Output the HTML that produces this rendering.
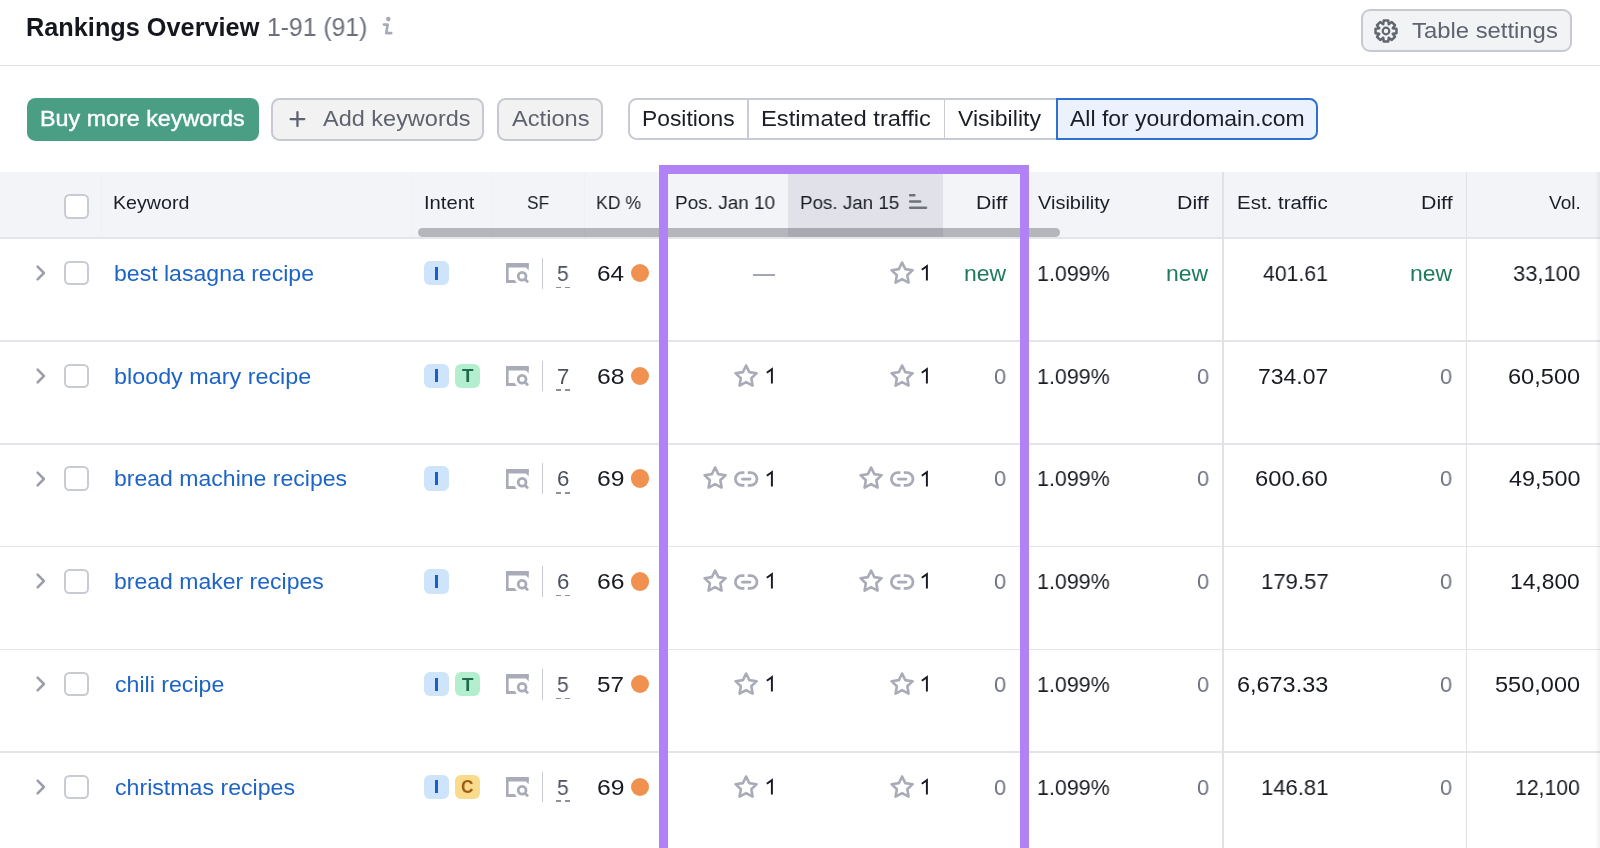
<!DOCTYPE html>
<html><head><meta charset="utf-8"><title>Rankings Overview</title>
<style>
html,body{margin:0;padding:0;background:#fff;width:1600px;height:848px;overflow:hidden;position:relative;font-family:"Liberation Sans", sans-serif}
.a,.btn,.cb,.badge,.t{position:absolute;box-sizing:border-box}
.t{white-space:nowrap;transform-origin:0 0;will-change:transform}
.cb{width:24.5px;height:24.5px;border:2px solid #c9cbd3;border-radius:5.5px;background:#fff}
.badge{width:24.6px;height:24.6px;border-radius:6px}
svg.a{overflow:visible}
</style></head><body>
<svg class="a" style="left:380px;top:14px" width="16" height="24" viewBox="380 14 16 24"><circle cx="388.3" cy="19.1" r="2.3" fill="#a8abb6"/><path d="M384 24.6H387.6L386.3 33.2H391.2" fill="none" stroke="#a8abb6" stroke-width="2.7" stroke-linecap="round" stroke-linejoin="round"/></svg>
<div class="btn" style="left:1360.5px;top:9.2px;width:211px;height:42.6px;background:#f2f3f5;border:2px solid #c6c9d1;border-radius:9px"></div>
<svg class="a" style="left:1372.4px;top:16.6px" width="28" height="28" viewBox="1372.4 16.6 28 28"><path d="M1383.56 23.88 L1384.17 20.14 L1388.63 20.14 L1389.24 23.88 L1389.14 23.84 L1392.22 21.62 L1395.38 24.78 L1393.16 27.86 L1393.12 27.76 L1396.86 28.37 L1396.86 32.83 L1393.12 33.44 L1393.16 33.34 L1395.38 36.42 L1392.22 39.58 L1389.14 37.36 L1389.24 37.32 L1388.63 41.06 L1384.17 41.06 L1383.56 37.32 L1383.66 37.36 L1380.58 39.58 L1377.42 36.42 L1379.64 33.34 L1379.68 33.44 L1375.94 32.83 L1375.94 28.37 L1379.68 27.76 L1379.64 27.86 L1377.42 24.78 L1380.58 21.62 L1383.66 23.84Z" fill="none" stroke="#62666f" stroke-width="2.5" stroke-linejoin="round"/><circle cx="1386.4" cy="30.6" r="3.3" fill="none" stroke="#62666f" stroke-width="2.2"/></svg>
<div class="a" style="left:0;top:64.6px;width:1600px;height:1.8px;background:#dfe0e6"></div>
<div class="btn" style="left:26.7px;top:97.6px;width:231.9px;height:43.2px;background:#4a9e84;border-radius:8.5px"></div>
<div class="btn" style="left:271.2px;top:97.9px;width:212.5px;height:42.7px;background:#f2f2f3;border:2px solid #c6c9d1;border-radius:8.5px"></div>
<svg class="a" style="left:286px;top:108px" width="24" height="24" viewBox="286 108 24 24"><path d="M290.6 119.1H304.3M297.45 112.2V126" stroke="#5f6370" stroke-width="2.3" stroke-linecap="round"/></svg>
<div class="btn" style="left:497.4px;top:97.9px;width:105.3px;height:42.7px;background:#f2f2f3;border:2px solid #c6c9d1;border-radius:8.5px"></div>
<div class="btn" style="left:628.4px;top:97.8px;width:690px;height:42.4px;background:#fff;border:2px solid #c8cbd3;border-radius:8.5px"></div>
<div class="a" style="left:747.4px;top:98px;width:1.6px;height:42px;background:#c9cbd3"></div>
<div class="a" style="left:943.9px;top:98px;width:1.6px;height:42px;background:#c9cbd3"></div>
<div class="btn" style="left:1055.5px;top:97.8px;width:262.9px;height:42.4px;background:#ebf2fe;border:2px solid #3070d0;border-radius:0 8.5px 8.5px 0"></div>
<div class="a" style="left:0;top:172.2px;width:1600px;height:66.30000000000001px;background:#f3f4f8"></div>
<div class="a" style="left:788.1px;top:172.2px;width:154.7px;height:66.30000000000001px;background:#e1e2e9"></div>
<div class="a" style="left:101px;top:172.2px;width:1px;height:66.30000000000001px;background:#eef0f4"></div>
<div class="a" style="left:411.9px;top:172.2px;width:1px;height:66.30000000000001px;background:#eef0f4"></div>
<div class="a" style="left:491.9px;top:172.2px;width:1px;height:66.30000000000001px;background:#eef0f4"></div>
<div class="a" style="left:583.8px;top:172.2px;width:1px;height:66.30000000000001px;background:#eef0f4"></div>
<div class="a" style="left:0;top:237.2px;width:1600px;height:1.5px;background:#e4e5eb"></div>
<div class="cb" style="left:64.4px;top:194.3px"></div>
<svg class="a" style="left:905px;top:190px" width="26" height="22" viewBox="905 190 26 22"><path d="M910.2 195.3H914.4M910.2 201.5H920.2M910.2 207.7H926" stroke="#6e727d" stroke-width="2.6" stroke-linecap="round"/></svg>
<div class="a" style="left:0;top:340.35px;width:1600px;height:1.6px;background:#e4e5eb"></div>
<svg class="a" style="left:32px;top:262.10px" width="18" height="22" viewBox="32 262.10 18 22"><path d="M37.6 266.70L43.9 273.10L37.6 279.50" fill="none" stroke="#9b9ea8" stroke-width="2.5" stroke-linecap="round" stroke-linejoin="round"/></svg>
<div class="cb" style="left:64.3px;top:260.90px"></div>
<div class="badge" style="left:424.2px;top:260.80px;background:#cde4fb;color:#1b5fc5"></div>
<div class="a" style="left:435.2px;top:266.50px;width:2.8px;height:13.2px;background:#1b5fc5"></div>
<svg class="a" style="left:504.40px;top:261.10px" width="28" height="25" viewBox="504.40 261.10 28 25"><g fill="#a9acb8"><rect x="506.40" y="263.10" width="22.7" height="4.6" rx="1"/><rect x="506.40" y="263.10" width="2.6" height="19.9" rx="0.8"/><path d="M506.40 280.10H515.00L517.20 283.00H506.40Z"/><path d="M526.50 263.10H529.10V270.50L526.50 267.70Z"/></g><circle cx="522.50" cy="276.40" r="3.9" fill="none" stroke="#a9acb8" stroke-width="2.8"/><path d="M525.60 279.50L527.70 281.60" stroke="#a9acb8" stroke-width="2.8" stroke-linecap="round"/></svg>
<div class="a" style="left:541.7px;top:257.90px;width:1.6px;height:30.7px;background:#c9cbd3"></div>
<div class="a" style="left:556px;top:286.50px;width:4.5px;height:1.5px;background:#8d909b"></div>
<div class="a" style="left:565.2px;top:286.50px;width:4.6px;height:1.5px;background:#8d909b"></div>
<div class="a" style="left:630.5px;top:263.85px;width:18.5px;height:18.5px;border-radius:50%;background:#f09150"></div>
<div class="a" style="left:753.4px;top:274.00px;width:21.6px;height:1.5px;background:#a4a6b6"></div>
<svg class="a" style="left:919.00px;top:262.00px" width="12" height="22" viewBox="919.00 262.00 12 22"><path d="M921.80 269.70L926.90 266.10V280.50" fill="none" stroke="#191b23" stroke-width="1.95" stroke-linejoin="miter"/></svg>
<svg class="a" style="left:886.80px;top:257.80px" width="30" height="30" viewBox="886.80 257.80 30 30"><path d="M901.90 262.30 L905.13 268.95 L912.46 269.97 L907.13 275.10 L908.42 282.38 L901.90 278.90 L895.38 282.38 L896.67 275.10 L891.34 269.97 L898.67 268.95Z" fill="none" stroke="#a9acb8" stroke-width="2.6" stroke-linejoin="round"/></svg>
<div class="a" style="left:0;top:443.10px;width:1600px;height:1.6px;background:#e4e5eb"></div>
<svg class="a" style="left:32px;top:364.85px" width="18" height="22" viewBox="32 364.85 18 22"><path d="M37.6 369.45L43.9 375.85L37.6 382.25" fill="none" stroke="#9b9ea8" stroke-width="2.5" stroke-linecap="round" stroke-linejoin="round"/></svg>
<div class="cb" style="left:64.3px;top:363.65px"></div>
<div class="badge" style="left:424.2px;top:363.55px;background:#cde4fb;color:#1b5fc5"></div>
<div class="a" style="left:435.2px;top:369.25px;width:2.8px;height:13.2px;background:#1b5fc5"></div>
<div class="badge" style="left:455.0px;top:363.55px;background:#b3efcf;color:#216b4d"></div>
<svg class="a" style="left:504.40px;top:363.85px" width="28" height="25" viewBox="504.40 363.85 28 25"><g fill="#a9acb8"><rect x="506.40" y="365.85" width="22.7" height="4.6" rx="1"/><rect x="506.40" y="365.85" width="2.6" height="19.9" rx="0.8"/><path d="M506.40 382.85H515.00L517.20 385.75H506.40Z"/><path d="M526.50 365.85H529.10V373.25L526.50 370.45Z"/></g><circle cx="522.50" cy="379.15" r="3.9" fill="none" stroke="#a9acb8" stroke-width="2.8"/><path d="M525.60 382.25L527.70 384.35" stroke="#a9acb8" stroke-width="2.8" stroke-linecap="round"/></svg>
<div class="a" style="left:541.7px;top:360.65px;width:1.6px;height:30.7px;background:#c9cbd3"></div>
<div class="a" style="left:556px;top:389.25px;width:4.5px;height:1.5px;background:#8d909b"></div>
<div class="a" style="left:565.2px;top:389.25px;width:4.6px;height:1.5px;background:#8d909b"></div>
<div class="a" style="left:630.5px;top:366.60px;width:18.5px;height:18.5px;border-radius:50%;background:#f09150"></div>
<svg class="a" style="left:763.50px;top:364.75px" width="12" height="22" viewBox="763.50 364.75 12 22"><path d="M766.30 372.45L771.40 368.85V383.25" fill="none" stroke="#191b23" stroke-width="1.95" stroke-linejoin="miter"/></svg>
<svg class="a" style="left:731.30px;top:360.55px" width="30" height="30" viewBox="731.30 360.55 30 30"><path d="M746.40 365.05 L749.63 371.70 L756.96 372.72 L751.63 377.85 L752.92 385.13 L746.40 381.65 L739.88 385.13 L741.17 377.85 L735.84 372.72 L743.17 371.70Z" fill="none" stroke="#a9acb8" stroke-width="2.6" stroke-linejoin="round"/></svg>
<svg class="a" style="left:919.00px;top:364.75px" width="12" height="22" viewBox="919.00 364.75 12 22"><path d="M921.80 372.45L926.90 368.85V383.25" fill="none" stroke="#191b23" stroke-width="1.95" stroke-linejoin="miter"/></svg>
<svg class="a" style="left:886.80px;top:360.55px" width="30" height="30" viewBox="886.80 360.55 30 30"><path d="M901.90 365.05 L905.13 371.70 L912.46 372.72 L907.13 377.85 L908.42 385.13 L901.90 381.65 L895.38 385.13 L896.67 377.85 L891.34 372.72 L898.67 371.70Z" fill="none" stroke="#a9acb8" stroke-width="2.6" stroke-linejoin="round"/></svg>
<div class="a" style="left:0;top:545.85px;width:1600px;height:1.6px;background:#e4e5eb"></div>
<svg class="a" style="left:32px;top:467.60px" width="18" height="22" viewBox="32 467.60 18 22"><path d="M37.6 472.20L43.9 478.60L37.6 485.00" fill="none" stroke="#9b9ea8" stroke-width="2.5" stroke-linecap="round" stroke-linejoin="round"/></svg>
<div class="cb" style="left:64.3px;top:466.40px"></div>
<div class="badge" style="left:424.2px;top:466.30px;background:#cde4fb;color:#1b5fc5"></div>
<div class="a" style="left:435.2px;top:472.00px;width:2.8px;height:13.2px;background:#1b5fc5"></div>
<svg class="a" style="left:504.40px;top:466.60px" width="28" height="25" viewBox="504.40 466.60 28 25"><g fill="#a9acb8"><rect x="506.40" y="468.60" width="22.7" height="4.6" rx="1"/><rect x="506.40" y="468.60" width="2.6" height="19.9" rx="0.8"/><path d="M506.40 485.60H515.00L517.20 488.50H506.40Z"/><path d="M526.50 468.60H529.10V476.00L526.50 473.20Z"/></g><circle cx="522.50" cy="481.90" r="3.9" fill="none" stroke="#a9acb8" stroke-width="2.8"/><path d="M525.60 485.00L527.70 487.10" stroke="#a9acb8" stroke-width="2.8" stroke-linecap="round"/></svg>
<div class="a" style="left:541.7px;top:463.40px;width:1.6px;height:30.7px;background:#c9cbd3"></div>
<div class="a" style="left:556px;top:492.00px;width:4.5px;height:1.5px;background:#8d909b"></div>
<div class="a" style="left:565.2px;top:492.00px;width:4.6px;height:1.5px;background:#8d909b"></div>
<div class="a" style="left:630.5px;top:469.35px;width:18.5px;height:18.5px;border-radius:50%;background:#f09150"></div>
<svg class="a" style="left:763.50px;top:467.50px" width="12" height="22" viewBox="763.50 467.50 12 22"><path d="M766.30 475.20L771.40 471.60V486.00" fill="none" stroke="#191b23" stroke-width="1.95" stroke-linejoin="miter"/></svg>
<svg class="a" style="left:732.30px;top:467.90px" width="30" height="22" viewBox="732.30 467.90 30 22"><path d="M744.70 472.50H742.10A6.4 6.4 0 0 0 742.10 485.30H744.70M748.10 472.50H750.90A6.4 6.4 0 0 1 750.90 485.30H748.10" fill="none" stroke="#a9acb8" stroke-width="2.75"/><path d="M742.70 478.90H750.30" fill="none" stroke="#a9acb8" stroke-width="2.75" stroke-linecap="round"/></svg>
<svg class="a" style="left:700.40px;top:463.30px" width="30" height="30" viewBox="700.40 463.30 30 30"><path d="M715.50 467.80 L718.73 474.45 L726.06 475.47 L720.73 480.60 L722.02 487.88 L715.50 484.40 L708.98 487.88 L710.27 480.60 L704.94 475.47 L712.27 474.45Z" fill="none" stroke="#a9acb8" stroke-width="2.6" stroke-linejoin="round"/></svg>
<svg class="a" style="left:919.00px;top:467.50px" width="12" height="22" viewBox="919.00 467.50 12 22"><path d="M921.80 475.20L926.90 471.60V486.00" fill="none" stroke="#191b23" stroke-width="1.95" stroke-linejoin="miter"/></svg>
<svg class="a" style="left:887.80px;top:467.90px" width="30" height="22" viewBox="887.80 467.90 30 22"><path d="M900.20 472.50H897.60A6.4 6.4 0 0 0 897.60 485.30H900.20M903.60 472.50H906.40A6.4 6.4 0 0 1 906.40 485.30H903.60" fill="none" stroke="#a9acb8" stroke-width="2.75"/><path d="M898.20 478.90H905.80" fill="none" stroke="#a9acb8" stroke-width="2.75" stroke-linecap="round"/></svg>
<svg class="a" style="left:855.90px;top:463.30px" width="30" height="30" viewBox="855.90 463.30 30 30"><path d="M871.00 467.80 L874.23 474.45 L881.56 475.47 L876.23 480.60 L877.52 487.88 L871.00 484.40 L864.48 487.88 L865.77 480.60 L860.44 475.47 L867.77 474.45Z" fill="none" stroke="#a9acb8" stroke-width="2.6" stroke-linejoin="round"/></svg>
<div class="a" style="left:0;top:648.60px;width:1600px;height:1.6px;background:#e4e5eb"></div>
<svg class="a" style="left:32px;top:570.35px" width="18" height="22" viewBox="32 570.35 18 22"><path d="M37.6 574.95L43.9 581.35L37.6 587.75" fill="none" stroke="#9b9ea8" stroke-width="2.5" stroke-linecap="round" stroke-linejoin="round"/></svg>
<div class="cb" style="left:64.3px;top:569.15px"></div>
<div class="badge" style="left:424.2px;top:569.05px;background:#cde4fb;color:#1b5fc5"></div>
<div class="a" style="left:435.2px;top:574.75px;width:2.8px;height:13.2px;background:#1b5fc5"></div>
<svg class="a" style="left:504.40px;top:569.35px" width="28" height="25" viewBox="504.40 569.35 28 25"><g fill="#a9acb8"><rect x="506.40" y="571.35" width="22.7" height="4.6" rx="1"/><rect x="506.40" y="571.35" width="2.6" height="19.9" rx="0.8"/><path d="M506.40 588.35H515.00L517.20 591.25H506.40Z"/><path d="M526.50 571.35H529.10V578.75L526.50 575.95Z"/></g><circle cx="522.50" cy="584.65" r="3.9" fill="none" stroke="#a9acb8" stroke-width="2.8"/><path d="M525.60 587.75L527.70 589.85" stroke="#a9acb8" stroke-width="2.8" stroke-linecap="round"/></svg>
<div class="a" style="left:541.7px;top:566.15px;width:1.6px;height:30.7px;background:#c9cbd3"></div>
<div class="a" style="left:556px;top:594.75px;width:4.5px;height:1.5px;background:#8d909b"></div>
<div class="a" style="left:565.2px;top:594.75px;width:4.6px;height:1.5px;background:#8d909b"></div>
<div class="a" style="left:630.5px;top:572.10px;width:18.5px;height:18.5px;border-radius:50%;background:#f09150"></div>
<svg class="a" style="left:763.50px;top:570.25px" width="12" height="22" viewBox="763.50 570.25 12 22"><path d="M766.30 577.95L771.40 574.35V588.75" fill="none" stroke="#191b23" stroke-width="1.95" stroke-linejoin="miter"/></svg>
<svg class="a" style="left:732.30px;top:570.65px" width="30" height="22" viewBox="732.30 570.65 30 22"><path d="M744.70 575.25H742.10A6.4 6.4 0 0 0 742.10 588.05H744.70M748.10 575.25H750.90A6.4 6.4 0 0 1 750.90 588.05H748.10" fill="none" stroke="#a9acb8" stroke-width="2.75"/><path d="M742.70 581.65H750.30" fill="none" stroke="#a9acb8" stroke-width="2.75" stroke-linecap="round"/></svg>
<svg class="a" style="left:700.40px;top:566.05px" width="30" height="30" viewBox="700.40 566.05 30 30"><path d="M715.50 570.55 L718.73 577.20 L726.06 578.22 L720.73 583.35 L722.02 590.63 L715.50 587.15 L708.98 590.63 L710.27 583.35 L704.94 578.22 L712.27 577.20Z" fill="none" stroke="#a9acb8" stroke-width="2.6" stroke-linejoin="round"/></svg>
<svg class="a" style="left:919.00px;top:570.25px" width="12" height="22" viewBox="919.00 570.25 12 22"><path d="M921.80 577.95L926.90 574.35V588.75" fill="none" stroke="#191b23" stroke-width="1.95" stroke-linejoin="miter"/></svg>
<svg class="a" style="left:887.80px;top:570.65px" width="30" height="22" viewBox="887.80 570.65 30 22"><path d="M900.20 575.25H897.60A6.4 6.4 0 0 0 897.60 588.05H900.20M903.60 575.25H906.40A6.4 6.4 0 0 1 906.40 588.05H903.60" fill="none" stroke="#a9acb8" stroke-width="2.75"/><path d="M898.20 581.65H905.80" fill="none" stroke="#a9acb8" stroke-width="2.75" stroke-linecap="round"/></svg>
<svg class="a" style="left:855.90px;top:566.05px" width="30" height="30" viewBox="855.90 566.05 30 30"><path d="M871.00 570.55 L874.23 577.20 L881.56 578.22 L876.23 583.35 L877.52 590.63 L871.00 587.15 L864.48 590.63 L865.77 583.35 L860.44 578.22 L867.77 577.20Z" fill="none" stroke="#a9acb8" stroke-width="2.6" stroke-linejoin="round"/></svg>
<div class="a" style="left:0;top:751.35px;width:1600px;height:1.6px;background:#e4e5eb"></div>
<svg class="a" style="left:32px;top:673.10px" width="18" height="22" viewBox="32 673.10 18 22"><path d="M37.6 677.70L43.9 684.10L37.6 690.50" fill="none" stroke="#9b9ea8" stroke-width="2.5" stroke-linecap="round" stroke-linejoin="round"/></svg>
<div class="cb" style="left:64.3px;top:671.90px"></div>
<div class="badge" style="left:424.2px;top:671.80px;background:#cde4fb;color:#1b5fc5"></div>
<div class="a" style="left:435.2px;top:677.50px;width:2.8px;height:13.2px;background:#1b5fc5"></div>
<div class="badge" style="left:455.0px;top:671.80px;background:#b3efcf;color:#216b4d"></div>
<svg class="a" style="left:504.40px;top:672.10px" width="28" height="25" viewBox="504.40 672.10 28 25"><g fill="#a9acb8"><rect x="506.40" y="674.10" width="22.7" height="4.6" rx="1"/><rect x="506.40" y="674.10" width="2.6" height="19.9" rx="0.8"/><path d="M506.40 691.10H515.00L517.20 694.00H506.40Z"/><path d="M526.50 674.10H529.10V681.50L526.50 678.70Z"/></g><circle cx="522.50" cy="687.40" r="3.9" fill="none" stroke="#a9acb8" stroke-width="2.8"/><path d="M525.60 690.50L527.70 692.60" stroke="#a9acb8" stroke-width="2.8" stroke-linecap="round"/></svg>
<div class="a" style="left:541.7px;top:668.90px;width:1.6px;height:30.7px;background:#c9cbd3"></div>
<div class="a" style="left:556px;top:697.50px;width:4.5px;height:1.5px;background:#8d909b"></div>
<div class="a" style="left:565.2px;top:697.50px;width:4.6px;height:1.5px;background:#8d909b"></div>
<div class="a" style="left:630.5px;top:674.85px;width:18.5px;height:18.5px;border-radius:50%;background:#f09150"></div>
<svg class="a" style="left:763.50px;top:673.00px" width="12" height="22" viewBox="763.50 673.00 12 22"><path d="M766.30 680.70L771.40 677.10V691.50" fill="none" stroke="#191b23" stroke-width="1.95" stroke-linejoin="miter"/></svg>
<svg class="a" style="left:731.30px;top:668.80px" width="30" height="30" viewBox="731.30 668.80 30 30"><path d="M746.40 673.30 L749.63 679.95 L756.96 680.97 L751.63 686.10 L752.92 693.38 L746.40 689.90 L739.88 693.38 L741.17 686.10 L735.84 680.97 L743.17 679.95Z" fill="none" stroke="#a9acb8" stroke-width="2.6" stroke-linejoin="round"/></svg>
<svg class="a" style="left:919.00px;top:673.00px" width="12" height="22" viewBox="919.00 673.00 12 22"><path d="M921.80 680.70L926.90 677.10V691.50" fill="none" stroke="#191b23" stroke-width="1.95" stroke-linejoin="miter"/></svg>
<svg class="a" style="left:886.80px;top:668.80px" width="30" height="30" viewBox="886.80 668.80 30 30"><path d="M901.90 673.30 L905.13 679.95 L912.46 680.97 L907.13 686.10 L908.42 693.38 L901.90 689.90 L895.38 693.38 L896.67 686.10 L891.34 680.97 L898.67 679.95Z" fill="none" stroke="#a9acb8" stroke-width="2.6" stroke-linejoin="round"/></svg>
<div class="a" style="left:0;top:854.10px;width:1600px;height:1.6px;background:#e4e5eb"></div>
<svg class="a" style="left:32px;top:775.85px" width="18" height="22" viewBox="32 775.85 18 22"><path d="M37.6 780.45L43.9 786.85L37.6 793.25" fill="none" stroke="#9b9ea8" stroke-width="2.5" stroke-linecap="round" stroke-linejoin="round"/></svg>
<div class="cb" style="left:64.3px;top:774.65px"></div>
<div class="badge" style="left:424.2px;top:774.55px;background:#cde4fb;color:#1b5fc5"></div>
<div class="a" style="left:435.2px;top:780.25px;width:2.8px;height:13.2px;background:#1b5fc5"></div>
<div class="badge" style="left:455.0px;top:774.55px;background:#f8dc8c;color:#9a5a12"></div>
<svg class="a" style="left:504.40px;top:774.85px" width="28" height="25" viewBox="504.40 774.85 28 25"><g fill="#a9acb8"><rect x="506.40" y="776.85" width="22.7" height="4.6" rx="1"/><rect x="506.40" y="776.85" width="2.6" height="19.9" rx="0.8"/><path d="M506.40 793.85H515.00L517.20 796.75H506.40Z"/><path d="M526.50 776.85H529.10V784.25L526.50 781.45Z"/></g><circle cx="522.50" cy="790.15" r="3.9" fill="none" stroke="#a9acb8" stroke-width="2.8"/><path d="M525.60 793.25L527.70 795.35" stroke="#a9acb8" stroke-width="2.8" stroke-linecap="round"/></svg>
<div class="a" style="left:541.7px;top:771.65px;width:1.6px;height:30.7px;background:#c9cbd3"></div>
<div class="a" style="left:556px;top:800.25px;width:4.5px;height:1.5px;background:#8d909b"></div>
<div class="a" style="left:565.2px;top:800.25px;width:4.6px;height:1.5px;background:#8d909b"></div>
<div class="a" style="left:630.5px;top:777.60px;width:18.5px;height:18.5px;border-radius:50%;background:#f09150"></div>
<svg class="a" style="left:763.50px;top:775.75px" width="12" height="22" viewBox="763.50 775.75 12 22"><path d="M766.30 783.45L771.40 779.85V794.25" fill="none" stroke="#191b23" stroke-width="1.95" stroke-linejoin="miter"/></svg>
<svg class="a" style="left:731.30px;top:771.55px" width="30" height="30" viewBox="731.30 771.55 30 30"><path d="M746.40 776.05 L749.63 782.70 L756.96 783.72 L751.63 788.85 L752.92 796.13 L746.40 792.65 L739.88 796.13 L741.17 788.85 L735.84 783.72 L743.17 782.70Z" fill="none" stroke="#a9acb8" stroke-width="2.6" stroke-linejoin="round"/></svg>
<svg class="a" style="left:919.00px;top:775.75px" width="12" height="22" viewBox="919.00 775.75 12 22"><path d="M921.80 783.45L926.90 779.85V794.25" fill="none" stroke="#191b23" stroke-width="1.95" stroke-linejoin="miter"/></svg>
<svg class="a" style="left:886.80px;top:771.55px" width="30" height="30" viewBox="886.80 771.55 30 30"><path d="M901.90 776.05 L905.13 782.70 L912.46 783.72 L907.13 788.85 L908.42 796.13 L901.90 792.65 L895.38 796.13 L896.67 788.85 L891.34 783.72 L898.67 782.70Z" fill="none" stroke="#a9acb8" stroke-width="2.6" stroke-linejoin="round"/></svg>
<div class="a" style="left:1222.1px;top:172.2px;width:1.6px;height:675.8px;background:#e1e2e8"></div>
<div class="a" style="left:1465.7px;top:172.2px;width:1.6px;height:675.8px;background:#e1e2e8"></div>
<div class="a" style="left:1595px;top:172.2px;width:5px;height:675.8px;background:linear-gradient(90deg,rgba(0,0,0,0),rgba(0,0,0,0.06))"></div>
<div class="a" style="left:417.5px;top:228px;width:642.5px;height:9px;border-radius:4.5px;background:rgba(20,20,30,0.275)"></div>
<div class="a" style="left:659px;top:164.8px;width:370.3px;height:700px;box-sizing:border-box;border:9px solid #b082f5"></div>
<span class="t" style="left:26.42px;top:15.00px;font-size:25.03px;line-height:25.03px;color:#15171f;font-weight:700;transform:scaleX(1.0111)">Rankings Overview</span>
<span class="t" style="left:266.95px;top:15.00px;font-size:24.89px;line-height:24.89px;color:#6b6f7b;transform:scaleX(0.9934)">1-91 (91)</span>
<span class="t" style="left:1412.23px;top:20.00px;font-size:22.19px;line-height:22.19px;color:#5f6370;transform:scaleX(1.0747)">Table settings</span>
<span class="t" style="left:40.08px;top:108.00px;font-size:22.61px;line-height:22.61px;color:#ffffff;transform:scaleX(1.0308);-webkit-text-stroke:0.4px #fff">Buy more keywords</span>
<span class="t" style="left:322.80px;top:108.00px;font-size:22.61px;line-height:22.61px;color:#5f6370;transform:scaleX(1.0389)">Add keywords</span>
<span class="t" style="left:511.50px;top:108.00px;font-size:22.61px;line-height:22.61px;color:#5f6370;transform:scaleX(1.0458)">Actions</span>
<span class="t" style="left:641.82px;top:108.00px;font-size:21.90px;line-height:21.90px;color:#1b1e26;transform:scaleX(1.0432)">Positions</span>
<span class="t" style="left:760.74px;top:108.00px;font-size:21.90px;line-height:21.90px;color:#1b1e26;transform:scaleX(1.0857)">Estimated traffic</span>
<span class="t" style="left:958.00px;top:108.00px;font-size:21.90px;line-height:21.90px;color:#1b1e26;transform:scaleX(1.0546)">Visibility</span>
<span class="t" style="left:1070.40px;top:108.00px;font-size:21.90px;line-height:21.90px;color:#1b1e26;transform:scaleX(1.0484)">All for yourdomain.com</span>
<span class="t" style="left:113.47px;top:193.00px;font-size:19.06px;line-height:19.06px;color:#1b1e26;transform:scaleX(1.0301)">Keyword</span>
<span class="t" style="left:423.82px;top:193.00px;font-size:19.06px;line-height:19.06px;color:#1b1e26;transform:scaleX(1.0592)">Intent</span>
<span class="t" style="left:526.86px;top:193.00px;font-size:19.06px;line-height:19.06px;color:#1b1e26;transform:scaleX(0.9077)">SF</span>
<span class="t" style="left:596.02px;top:193.00px;font-size:19.06px;line-height:19.06px;color:#1b1e26;transform:scaleX(0.9258)">KD %</span>
<span class="t" style="left:674.77px;top:193.00px;font-size:19.06px;line-height:19.06px;color:#1b1e26;transform:scaleX(0.9945)">Pos. Jan 10</span>
<span class="t" style="left:799.78px;top:193.00px;font-size:19.06px;line-height:19.06px;color:#1b1e26;transform:scaleX(0.9863)">Pos. Jan 15</span>
<span class="t" style="left:975.55px;top:193.00px;font-size:19.06px;line-height:19.06px;color:#1b1e26;transform:scaleX(1.1110)">Diff</span>
<span class="t" style="left:1038.40px;top:193.00px;font-size:19.06px;line-height:19.06px;color:#1b1e26;transform:scaleX(1.0497)">Visibility</span>
<span class="t" style="left:1177.33px;top:193.00px;font-size:19.06px;line-height:19.06px;color:#1b1e26;transform:scaleX(1.1185)">Diff</span>
<span class="t" style="left:1237.00px;top:193.00px;font-size:19.06px;line-height:19.06px;color:#1b1e26;transform:scaleX(1.0751)">Est. traffic</span>
<span class="t" style="left:1421.13px;top:193.00px;font-size:19.06px;line-height:19.06px;color:#1b1e26;transform:scaleX(1.1185)">Diff</span>
<span class="t" style="left:1549.40px;top:193.00px;font-size:19.06px;line-height:19.06px;color:#1b1e26;transform:scaleX(0.9977)">Vol.</span>
<span class="t" style="left:114.06px;top:264.00px;font-size:21.51px;line-height:21.51px;color:#1d64c6;transform:scaleX(1.0726)">best lasagna recipe</span>
<span class="t" style="left:557.14px;top:263.00px;font-size:22.19px;line-height:22.19px;color:#4d5160;transform:scaleX(0.9490)">5</span>
<span class="t" style="left:596.56px;top:262.00px;font-size:22.76px;line-height:22.76px;color:#191b23;transform:scaleX(1.0683)">64</span>
<span class="t" style="left:964.00px;top:262.00px;font-size:22.96px;line-height:22.96px;color:#1e7b5b">new</span>
<span class="t" style="left:1037.41px;top:262.00px;font-size:22.76px;line-height:22.76px;color:#191b23;transform:scaleX(0.9408)">1.099%</span>
<span class="t" style="left:1166.10px;top:262.00px;font-size:22.96px;line-height:22.96px;color:#1e7b5b">new</span>
<span class="t" style="left:1409.80px;top:262.00px;font-size:22.96px;line-height:22.96px;color:#1e7b5b">new</span>
<span class="t" style="left:1263.27px;top:262.00px;font-size:22.76px;line-height:22.76px;color:#191b23;transform:scaleX(0.9322)">401.61</span>
<span class="t" style="left:1512.91px;top:262.00px;font-size:22.76px;line-height:22.76px;color:#191b23;transform:scaleX(0.9644)">33,100</span>
<span class="t" style="left:114.04px;top:367.00px;font-size:21.51px;line-height:21.51px;color:#1d64c6;transform:scaleX(1.0858)">bloody mary recipe</span>
<span class="t" style="left:461.80px;top:367.00px;font-size:18.77px;line-height:18.77px;color:#216b4d;font-weight:700;transform:scaleX(0.9617)">T</span>
<span class="t" style="left:556.78px;top:366.00px;font-size:22.19px;line-height:22.19px;color:#4d5160;transform:scaleX(0.9806)">7</span>
<span class="t" style="left:596.54px;top:365.00px;font-size:22.76px;line-height:22.76px;color:#191b23;transform:scaleX(1.0846)">68</span>
<span class="t" style="left:994.32px;top:365.00px;font-size:22.76px;line-height:22.76px;color:#6c7080;transform:scaleX(0.9578)">0</span>
<span class="t" style="left:1037.41px;top:365.00px;font-size:22.76px;line-height:22.76px;color:#191b23;transform:scaleX(0.9408)">1.099%</span>
<span class="t" style="left:1196.72px;top:365.00px;font-size:22.76px;line-height:22.76px;color:#6c7080;transform:scaleX(0.9578)">0</span>
<span class="t" style="left:1440.42px;top:365.00px;font-size:22.76px;line-height:22.76px;color:#6c7080;transform:scaleX(0.9578)">0</span>
<span class="t" style="left:1257.92px;top:365.00px;font-size:22.76px;line-height:22.76px;color:#191b23;transform:scaleX(1.0100)">734.07</span>
<span class="t" style="left:1507.89px;top:365.00px;font-size:22.76px;line-height:22.76px;color:#191b23;transform:scaleX(1.0371)">60,500</span>
<span class="t" style="left:114.06px;top:469.00px;font-size:21.51px;line-height:21.51px;color:#1d64c6;transform:scaleX(1.0715)">bread machine recipes</span>
<span class="t" style="left:556.78px;top:468.00px;font-size:22.19px;line-height:22.19px;color:#4d5160;transform:scaleX(0.9806)">6</span>
<span class="t" style="left:596.54px;top:467.00px;font-size:22.76px;line-height:22.76px;color:#191b23;transform:scaleX(1.0846)">69</span>
<span class="t" style="left:994.32px;top:467.00px;font-size:22.76px;line-height:22.76px;color:#6c7080;transform:scaleX(0.9578)">0</span>
<span class="t" style="left:1037.41px;top:467.00px;font-size:22.76px;line-height:22.76px;color:#191b23;transform:scaleX(0.9408)">1.099%</span>
<span class="t" style="left:1196.72px;top:467.00px;font-size:22.76px;line-height:22.76px;color:#6c7080;transform:scaleX(0.9578)">0</span>
<span class="t" style="left:1440.42px;top:467.00px;font-size:22.76px;line-height:22.76px;color:#6c7080;transform:scaleX(0.9578)">0</span>
<span class="t" style="left:1255.08px;top:467.00px;font-size:22.76px;line-height:22.76px;color:#191b23;transform:scaleX(1.0459)">600.60</span>
<span class="t" style="left:1508.64px;top:467.00px;font-size:22.76px;line-height:22.76px;color:#191b23;transform:scaleX(1.0263)">49,500</span>
<span class="t" style="left:114.06px;top:572.00px;font-size:21.51px;line-height:21.51px;color:#1d64c6;transform:scaleX(1.0703)">bread maker recipes</span>
<span class="t" style="left:556.78px;top:571.00px;font-size:22.19px;line-height:22.19px;color:#4d5160;transform:scaleX(0.9806)">6</span>
<span class="t" style="left:596.54px;top:570.00px;font-size:22.76px;line-height:22.76px;color:#191b23;transform:scaleX(1.0846)">66</span>
<span class="t" style="left:994.32px;top:570.00px;font-size:22.76px;line-height:22.76px;color:#6c7080;transform:scaleX(0.9578)">0</span>
<span class="t" style="left:1037.41px;top:570.00px;font-size:22.76px;line-height:22.76px;color:#191b23;transform:scaleX(0.9408)">1.099%</span>
<span class="t" style="left:1196.72px;top:570.00px;font-size:22.76px;line-height:22.76px;color:#6c7080;transform:scaleX(0.9578)">0</span>
<span class="t" style="left:1440.42px;top:570.00px;font-size:22.76px;line-height:22.76px;color:#6c7080;transform:scaleX(0.9578)">0</span>
<span class="t" style="left:1260.52px;top:570.00px;font-size:22.76px;line-height:22.76px;color:#191b23;transform:scaleX(0.9722)">179.57</span>
<span class="t" style="left:1510.27px;top:570.00px;font-size:22.76px;line-height:22.76px;color:#191b23;transform:scaleX(1.0026)">14,800</span>
<span class="t" style="left:114.78px;top:675.00px;font-size:21.51px;line-height:21.51px;color:#1d64c6;transform:scaleX(1.0762)">chili recipe</span>
<span class="t" style="left:461.80px;top:676.00px;font-size:18.77px;line-height:18.77px;color:#216b4d;font-weight:700;transform:scaleX(0.9617)">T</span>
<span class="t" style="left:557.14px;top:674.00px;font-size:22.19px;line-height:22.19px;color:#4d5160;transform:scaleX(0.9490)">5</span>
<span class="t" style="left:596.94px;top:673.00px;font-size:22.76px;line-height:22.76px;color:#191b23;transform:scaleX(1.0683)">57</span>
<span class="t" style="left:994.32px;top:673.00px;font-size:22.76px;line-height:22.76px;color:#6c7080;transform:scaleX(0.9578)">0</span>
<span class="t" style="left:1037.41px;top:673.00px;font-size:22.76px;line-height:22.76px;color:#191b23;transform:scaleX(0.9408)">1.099%</span>
<span class="t" style="left:1196.72px;top:673.00px;font-size:22.76px;line-height:22.76px;color:#6c7080;transform:scaleX(0.9578)">0</span>
<span class="t" style="left:1440.42px;top:673.00px;font-size:22.76px;line-height:22.76px;color:#6c7080;transform:scaleX(0.9578)">0</span>
<span class="t" style="left:1237.00px;top:673.00px;font-size:22.76px;line-height:22.76px;color:#191b23;transform:scaleX(1.0300)">6,673.33</span>
<span class="t" style="left:1494.96px;top:673.00px;font-size:22.76px;line-height:22.76px;color:#191b23;transform:scaleX(1.0346)">550,000</span>
<span class="t" style="left:114.78px;top:778.00px;font-size:21.51px;line-height:21.51px;color:#1d64c6;transform:scaleX(1.0765)">christmas recipes</span>
<span class="t" style="left:461.06px;top:778.00px;font-size:18.77px;line-height:18.77px;color:#9a5a12;font-weight:700;transform:scaleX(0.9198)">C</span>
<span class="t" style="left:557.14px;top:777.00px;font-size:22.19px;line-height:22.19px;color:#4d5160;transform:scaleX(0.9490)">5</span>
<span class="t" style="left:596.54px;top:776.00px;font-size:22.76px;line-height:22.76px;color:#191b23;transform:scaleX(1.0846)">69</span>
<span class="t" style="left:994.32px;top:776.00px;font-size:22.76px;line-height:22.76px;color:#6c7080;transform:scaleX(0.9578)">0</span>
<span class="t" style="left:1037.41px;top:776.00px;font-size:22.76px;line-height:22.76px;color:#191b23;transform:scaleX(0.9408)">1.099%</span>
<span class="t" style="left:1196.72px;top:776.00px;font-size:22.76px;line-height:22.76px;color:#6c7080;transform:scaleX(0.9578)">0</span>
<span class="t" style="left:1440.42px;top:776.00px;font-size:22.76px;line-height:22.76px;color:#6c7080;transform:scaleX(0.9578)">0</span>
<span class="t" style="left:1260.82px;top:776.00px;font-size:22.76px;line-height:22.76px;color:#191b23;transform:scaleX(0.9678)">146.81</span>
<span class="t" style="left:1515.17px;top:776.00px;font-size:22.76px;line-height:22.76px;color:#191b23;transform:scaleX(0.9316)">12,100</span>
</body></html>
